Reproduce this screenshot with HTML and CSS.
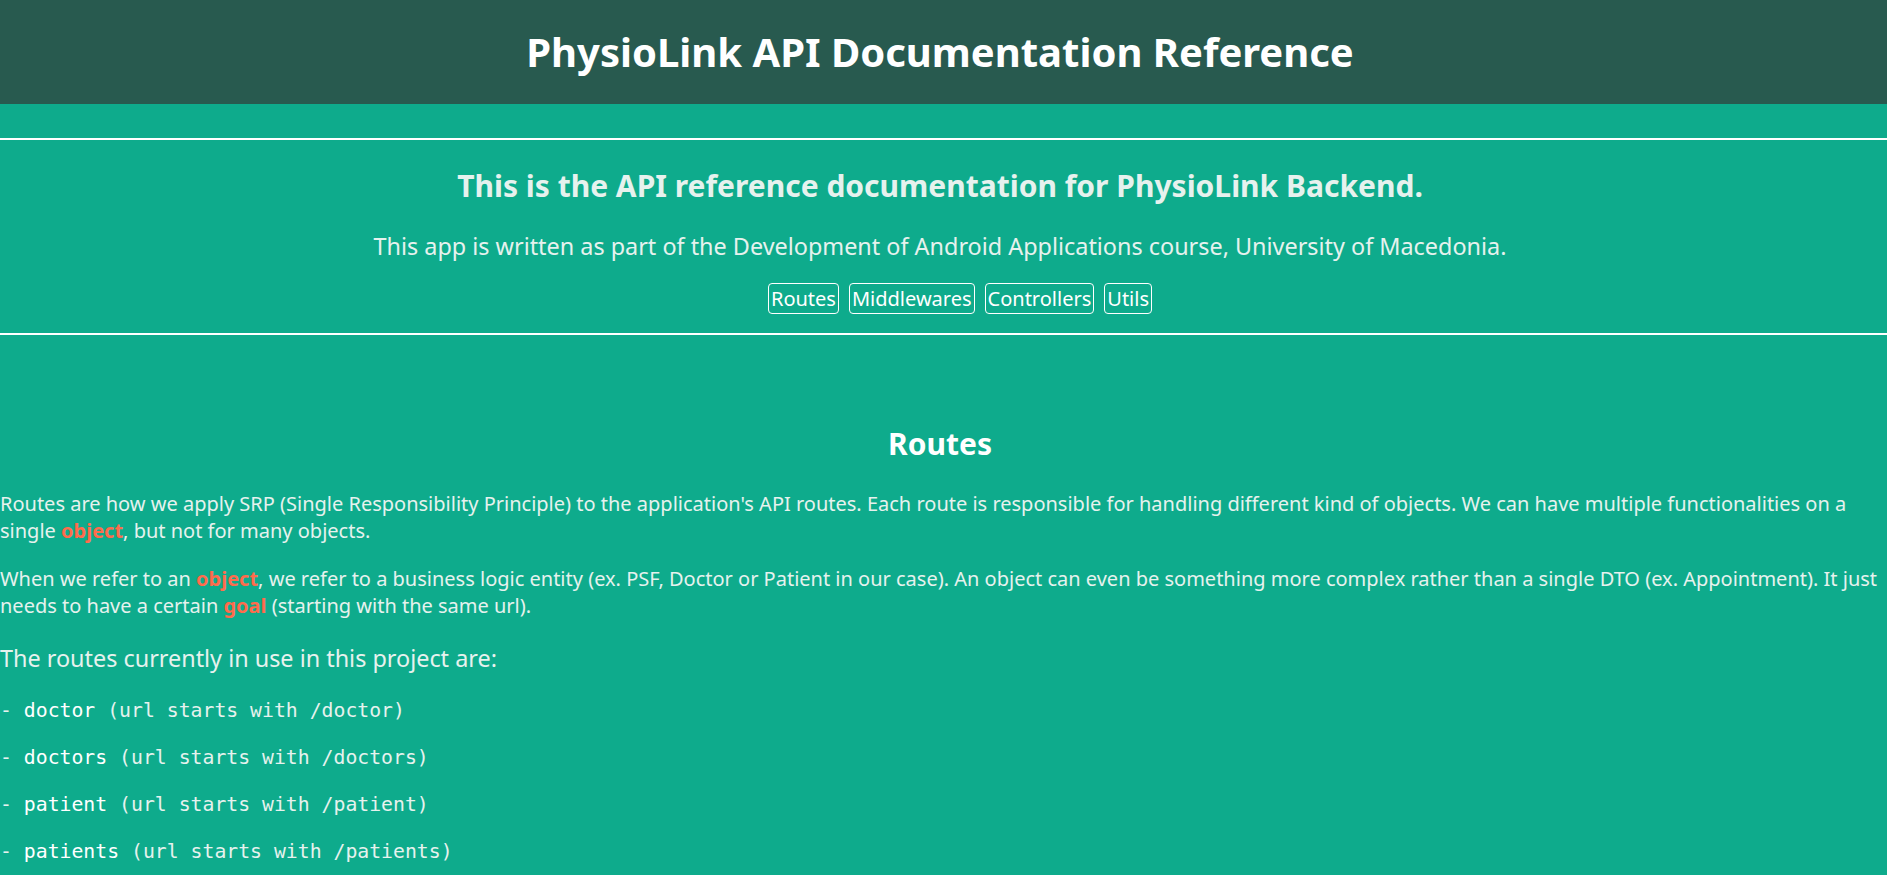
FILE: index.html
```html
<!DOCTYPE html>
<html lang="en">
<head>
<meta charset="utf-8">
<title>PhysioLink API Documentation Reference</title>
<link rel="stylesheet" href="styles.css">
</head>
<body>
<header class="top">
  <h1 class="top-title">PhysioLink API Documentation Reference</h1>
</header>
<main class="page">
  <section class="intro">
    <h2 class="intro-title">This is the API reference documentation for PhysioLink Backend.</h2>
    <p class="intro-text">This app is written as part of the Development of Android Applications course, University of Macedonia.</p>
    <nav class="nav">
      <a class="nav-btn" href="#routes">Routes</a>
      <a class="nav-btn" href="#middlewares">Middlewares</a>
      <a class="nav-btn" href="#controllers">Controllers</a>
      <a class="nav-btn" href="#utils">Utils</a>
    </nav>
  </section>
  <section class="section" id="routes">
    <h2 class="section-title">Routes</h2>
    <p class="text">Routes are how we apply SRP (Single Responsibility Principle) to the application's API routes. Each route is responsible for handling different kind of objects. We can have multiple functionalities on a single <b class="hl">object</b>, but not for many objects.</p>
    <p class="text">When we refer to an <b class="hl">object</b>, we refer to a business logic entity (ex. PSF, Doctor or Patient in our case). An object can even be something more complex rather than a single DTO (ex. Appointment). It just needs to have a certain <b class="hl">goal</b> (starting with the same url).</p>
    <p class="lead">The routes currently in use in this project are:</p>
    <ul class="routes">
      <li class="route">- <span class="route-name">doctor</span> (url starts with /doctor)</li>
      <li class="route">- <span class="route-name">doctors</span> (url starts with /doctors)</li>
      <li class="route">- <span class="route-name">patient</span> (url starts with /patient)</li>
      <li class="route">- <span class="route-name">patients</span> (url starts with /patients)</li>
    </ul>
  </section>
</main>
</body>
</html>
```
FILE: styles.css
```css
html, body {
  margin: 0;
  padding: 0;
}
body {
  background: #0eab8c;
  color: #e6f2ee;
  font-family: "Noto Sans", "Open Sans", sans-serif;
}
.top {
  background: #285a4f;
  height: 104px;
  padding-right: 7px;
  display: flex;
  align-items: center;
  justify-content: center;
}
.top-title {
  margin: 0;
  color: #ffffff;
  font-size: 40px;
  line-height: 54px;
  font-weight: 700;
}
.page {
  padding-top: 34px;
}
.intro {
  border-top: 2px solid #ffffff;
  border-bottom: 2px solid #ffffff;
  text-align: center;
  padding: 25px 7px 19px 0;
}
.intro-title {
  margin: 0;
  font-size: 30px;
  line-height: 41px;
  font-weight: 700;
}
.intro-text {
  margin: 24px 0 21px;
  font-size: 23.4px;
  line-height: 32px;
}
.nav {
  display: flex;
  justify-content: center;
  gap: 10px;
  padding-left: 40px;
}
.nav-btn {
  color: #ffffff;
  text-decoration: none;
  border: 1px solid #ffffff;
  border-radius: 4px;
  padding: 1px 2px;
  font-size: 20px;
  line-height: 27px;
}
.section {
  padding-top: 88px;
}
.section-title {
  margin: 0 0 27px;
  padding-right: 7px;
  text-align: center;
  color: #ffffff;
  font-size: 30px;
  line-height: 41px;
  font-weight: 700;
}
.text {
  margin: 0 0 22px;
  font-size: 20px;
  line-height: 26.5px;
}
.hl {
  color: #ff6c4c;
}
.lead {
  margin: 23px 0 25px;
  font-size: 23.4px;
  line-height: 32px;
}
.routes {
  list-style: none;
  margin: 0;
  padding: 0;
  font-family: "DejaVu Sans Mono", monospace;
  font-size: 19.8px;
}
.route {
  line-height: 24px;
  margin-bottom: 23px;
}
.route-name {
  color: #ffffff;
}
```
